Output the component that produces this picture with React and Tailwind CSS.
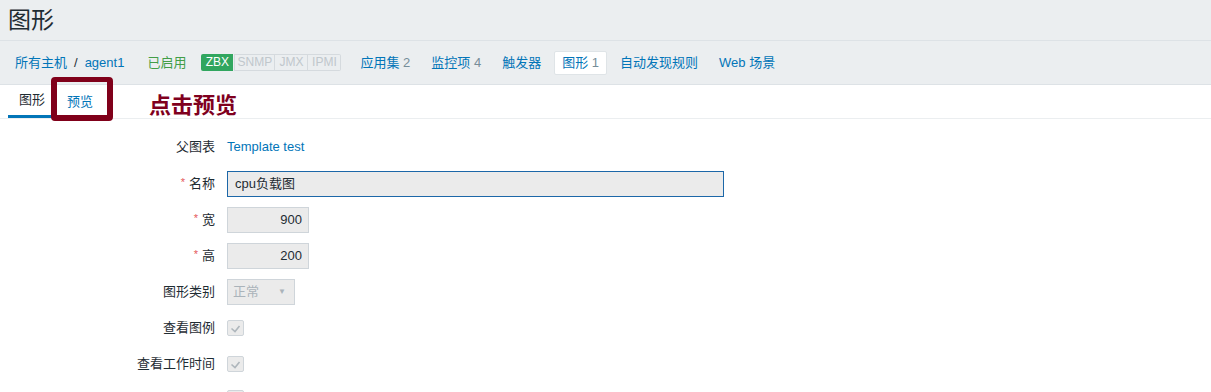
const font = { fontFamily: '"Liberation Sans", Arial, "Noto Sans CJK SC", sans-serif' };

function NavLink({ children, count, active }) {
  return (
    <span
      className={
        'px-[7px] py-[3px] leading-[16px] rounded-[2px] border ' +
        (active ? 'bg-white border-[#dfe4e7]' : 'border-transparent')
      }
    >
      <span className="text-[#0275b8]">{children}</span>
      {count && <span className="text-[#768d99]"> {count}</span>}
    </span>
  );
}

function Label({ children, required }) {
  return (
    <div className="w-[215px] shrink-0 text-right text-[#1f2c33]">
      {required && <span className="text-[#e45959] text-[11px] mr-[4px] align-top">*</span>}
      {children}
    </div>
  );
}

function Checkbox() {
  return (
    <div className="w-[17px] h-[16px] border border-[#cfd5da] bg-[#ebebeb] rounded-[2px] flex items-center justify-center">
      <svg width="11" height="9" viewBox="0 0 11 9">
        <polyline points="1.5,4.5 5,7.5 9.5,2" fill="none" stroke="#aeb6bc" strokeWidth="1.6" />
      </svg>
    </div>
  );
}

export default function App() {
  return (
    <div className="relative min-h-[392px] bg-white text-[13px]" style={font}>
      {/* 标题 */}
      <div className="h-[41px] bg-[#ebeef0] border-b border-[#dde2e6] pl-[8px] flex items-center">
        <h1 className="text-[23px] text-[#1f2c33] leading-none">图形</h1>
      </div>

      {/* 主机导航 */}
      <div className="h-[44px] bg-[#ebeef0] border-b border-[#dde2e6] flex items-center">
        <span className="ml-[15px] text-[#0275b8]">所有主机</span>
        <span className="mx-[7px] text-[#1f2c33]">/</span>
        <span className="text-[#0275b8]">agent1</span>
        <span className="ml-[23px] text-[#429e47]">已启用</span>
        <div className="ml-[15px] flex text-[12px] leading-[15px] font-normal">
          <span className="w-[32px] text-center bg-[#31a65f] text-white rounded-l-[2px] py-[1px]">ZBX</span>
          <span className="w-[41px] text-center border border-[#d5dade] text-[#c0c7cc] ml-[1px]">SNMP</span>
          <span className="w-[33px] text-center border border-l-0 border-[#d5dade] text-[#c0c7cc]">JMX</span>
          <span className="w-[33px] text-center border border-l-0 border-[#d5dade] text-[#c0c7cc] rounded-r-[2px]">IPMI</span>
        </div>
        <div className="ml-[11px] flex items-center gap-[5px]">
          <NavLink count="2">应用集</NavLink>
          <NavLink count="4">监控项</NavLink>
          <NavLink>触发器</NavLink>
          <NavLink count="1" active>图形</NavLink>
          <NavLink>自动发现规则</NavLink>
          <NavLink>Web 场景</NavLink>
        </div>
      </div>

      {/* 标签页 */}
      <div className="h-[34px] border-b border-[#ebeef0] flex pl-[8px]">
        <div className="h-[33px] px-[11px] flex items-center border-b-[3px] border-[#0275b8] text-[#1f2c33]">图形</div>
        <div className="h-[33px] px-[11px] flex items-center text-[#0275b8]">预览</div>
      </div>

      {/* 表单 */}
      <div className="pt-[15px] flex flex-col text-[#1f2c33]">
        <div className="h-[26px] flex items-center mb-[11px]">
          <Label>父图表</Label>
          <span className="ml-[12px] text-[#0275b8]">Template test</span>
        </div>
        <div className="flex flex-col gap-[10px]">
          <div className="h-[26px] flex items-center">
            <Label required>名称</Label>
            <div className="ml-[12px] w-[497px] h-[26px] border border-[#1c67a8] bg-[#ebebeb] pl-[7px] flex items-center">cpu负载图</div>
          </div>
          <div className="h-[26px] flex items-center">
            <Label required>宽</Label>
            <div className="ml-[12px] w-[82px] h-[26px] border border-[#cfd5da] bg-[#ebebeb] pr-[6px] flex items-center justify-end">900</div>
          </div>
          <div className="h-[26px] flex items-center">
            <Label required>高</Label>
            <div className="ml-[12px] w-[82px] h-[26px] border border-[#cfd5da] bg-[#ebebeb] pr-[6px] flex items-center justify-end">200</div>
          </div>
          <div className="h-[26px] flex items-center">
            <Label>图形类别</Label>
            <div className="ml-[12px] w-[68px] h-[26px] border border-[#cfd5da] bg-[#ebebeb] px-[5px] flex items-center justify-between text-[#aab3ba]">
              <span>正常</span>
              <span className="text-[8px] mr-[3px]">▼</span>
            </div>
          </div>
          <div className="h-[26px] flex items-center">
            <Label>查看图例</Label>
            <div className="ml-[12px]"><Checkbox /></div>
          </div>
          <div className="h-[26px] flex items-center">
            <Label>查看工作时间</Label>
            <div className="ml-[12px]"><Checkbox /></div>
          </div>
          <div className="h-[26px] flex items-start pt-[3px]">
            <Label />
            <div className="ml-[12px]"><Checkbox /></div>
          </div>
        </div>
      </div>

      {/* 标注 */}
      <div className="absolute left-[51px] top-[77px] w-[62px] h-[44px] border-[6px] border-t-[5px] border-[#80001a] rounded-[4px]" />
      <div className="absolute left-[149px] top-[93px] text-[22px] font-bold leading-[26px] text-[#80001e]">点击预览</div>
    </div>
  );
}
